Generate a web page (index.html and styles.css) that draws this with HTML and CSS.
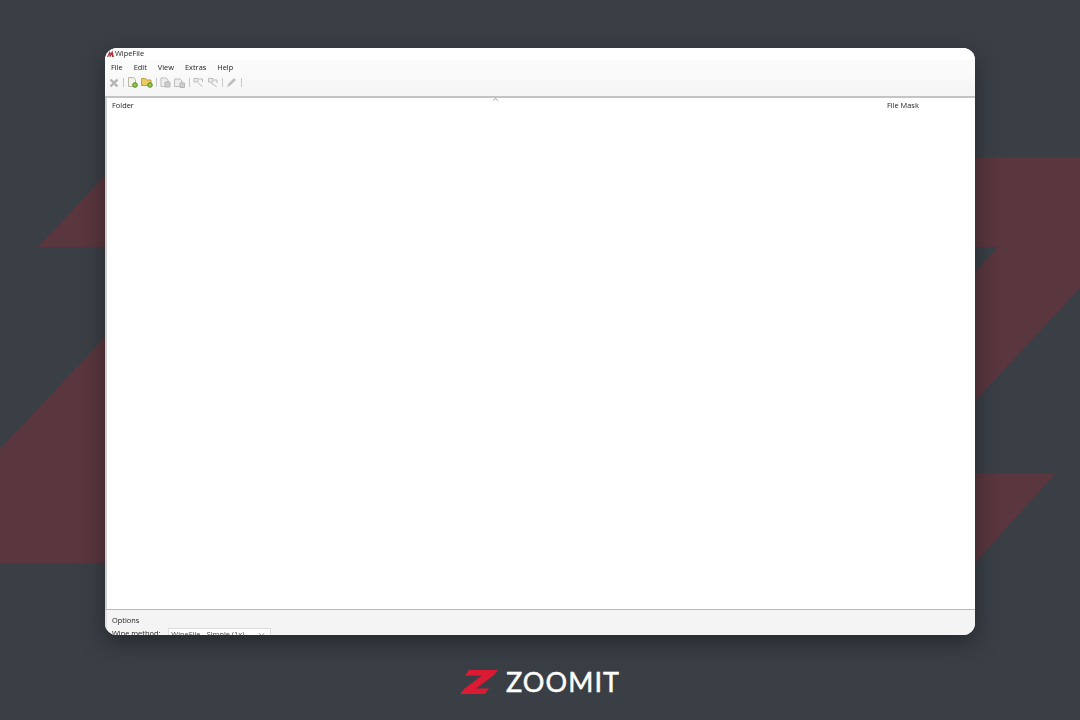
FILE: index.html
```html
<!DOCTYPE html>
<html lang="en">
<head>
    <meta charset="UTF-8">
    <meta name="viewport" content="width=device-width, initial-scale=1.0">
    <title>WipeFile</title>
    <link rel="stylesheet" href="styles.css">
</head>
<body>
    <!-- big faded Z behind the window -->
    <svg class="bg_z" viewBox="0 0 1080 720" aria-hidden="true">
        <polygon points="38,247 122,157 1080,157 1080,288 975,401 975,272 998,247"/>
        <polygon points="0,449 105,337 300,337 300,563 0,563"/>
        <polygon points="900,473 1056,473 975,563 900,563"/>
    </svg>

    <div class="window">
        <div class="title_bar">
            <svg class="app_icon" viewBox="0 0 8 8"><path d="M0 8 L3 1 L4.500 4 L6 0 L8 8 L6 8 L5 5 L4 8 L3 8 L2.500 5 L1.500 8 Z"/></svg>
            <span>WipeFile</span>
        </div>
        <ul class="menu_bar">
            <li>File</li>
            <li>Edit</li>
            <li>View</li>
            <li>Extras</li>
            <li>Help</li>
        </ul>
        <div class="tool_bar">
            <svg class="tool tool_x" viewBox="0 0 10 10"><path d="M1.500 1.500 L8.500 8.500 M8.500 1.500 L1.500 8.500"/></svg>
            <i class="sep"></i>
            <svg class="tool" viewBox="0 0 11 11"><path class="page" d="M1.500 .5 H6.500 L8.500 2.500 V9.500 H1.500 Z"/><circle class="plus" cx="8" cy="8" r="2.300"/></svg>
            <svg class="tool tool_wide" viewBox="0 0 12 11"><path class="folder" d="M.5 1.500 H4.500 L5.500 3 H10 V8.500 H.5 Z"/><circle class="plus" cx="9" cy="8" r="2.300"/></svg>
            <i class="sep"></i>
            <svg class="tool" viewBox="0 0 11 11"><path class="grey_page" d="M1 1 H6 L8 3 V9.500 H1 Z"/><path class="grey_fill" d="M5 5 H10 V10 H5 Z"/></svg>
            <svg class="tool" viewBox="0 0 11 11"><path class="grey_page" d="M.5 2 H6 L8 4 V9.500 H.5 Z"/><path class="grey_fill" d="M6 6 H10.500 V10.500 H6 Z"/></svg>
            <i class="sep sep_wide"></i>
            <svg class="tool" viewBox="0 0 11 11"><path class="grey_page" d="M1 1.500 H5 V5 H1 Z M5 6 L9.500 9.500 M6 2 H9.500 V5"/></svg>
            <svg class="tool" viewBox="0 0 11 11"><path class="grey_page" d="M1.500 1.500 H6 V5 H1.500 Z M4 6 L9.500 9.500 M7 3 H10 V6"/></svg>
            <i class="sep sep_wide"></i>
            <svg class="tool tool_pen" viewBox="0 0 11 11"><path d="M1.500 9.500 L3 6.500 L8 1.500 L9.500 3 L4.500 8 Z"/></svg>
            <i class="sep sep_wide"></i>
        </div>

        <div class="list_box">
            <div class="list_head">
                <span class="col_folder">Folder</span>
                <span class="sort_caret"></span>
                <span class="col_mask">File Mask</span>
            </div>
        </div>

        <div class="options">
            <div class="options_title">Options</div>
            <div class="options_row">
                <label>Wipe method:</label>
                <div class="select">
                    <span>WipeFile - Simple (1x)</span>
                    <svg class="select_arrow" viewBox="0 0 8 5"><path d="M1 1 L4 4 L7 1"/></svg>
                </div>
            </div>
        </div>
    </div>

    <div class="brand">
        <svg class="brand_mark" viewBox="0 0 38 24"><path d="M9 0 H38 L34 5 L16 18.500 H29 L25 24 H0 L4 19 L22 5.500 H5 Z"/></svg>
        <span class="brand_name">ZOOMIT</span>
    </div>
</body>
</html>
```

FILE: styles.css
```css
*{margin: 0;padding: 0;box-sizing: border-box;}

html,body{height: 100%;}

body{
    position: relative;
    overflow: hidden;
    background: #3a3f46;
    font-family: "Open Sans", "Liberation Sans", sans-serif;
    display: flex;
    flex-direction: column;
    align-items: center;
    padding-top: 48px;
}

.bg_z{position: absolute;left: 0;top: 0;width: 1080px;height: 720px;}
.bg_z polygon{fill: #5a363e;}

.window{
    position: relative;
    width: 870px;
    height: 587px;
    flex: none;
    display: flex;
    flex-direction: column;
    overflow: hidden;
    background: #fff;
    border-radius: 12px;
    box-shadow: 0 8px 22px rgba(20,24,26,.55);
    color: #222;
    font-size: 7.4px;
}

.title_bar{
    height: 12px;
    display: flex;
    align-items: flex-start;
    gap: 1px;
    padding-left: 2px;
    background: #fff;
    flex: none;
}
.title_bar span{filter: blur(.4px);line-height: 10px;}
.app_icon{width: 7px;height: 7px;margin-top: 2px;fill: #b5303a;}

.menu_bar{
    height: 15px;
    flex: none;
    display: flex;
    align-items: center;
    gap: 11px;
    padding: 0 0 2px 6px;
    list-style: none;
    background: #fafafa;
}
.menu_bar li{filter: blur(.4px);}

.tool_bar{
    height: 23px;
    flex: none;
    display: flex;
    align-items: center;
    gap: 3px;
    padding: 0 0 6px 4px;
    background: linear-gradient(#f9f9f9, #f5f5f5);
    border-bottom: 2px solid #c4c4c4;
}
.sep{width: 1px;height: 9px;background: #c9c9c9;}
.sep_wide{margin-left: 1px;}

.tool{width: 11px;height: 11px;fill: none;stroke-width: 1;filter: blur(.5px);}
.tool_wide{width: 12px;}
.tool_x{width: 10px;height: 10px;margin-right: 1px;stroke: #b3b3b3;stroke-width: 2.400;}
.tool_pen{fill: #bdbdbd;stroke: #aaa;stroke-width: .5;}
.page{fill: #f3f3ea;stroke: #b9b9a8;}
.folder{fill: #e9cb62;stroke: #c4a23c;}
.plus{fill: #9bc53d;stroke: #4c8a2a;}
.grey_page{fill: #eee;stroke: #bbb;}
.grey_fill{fill: #ccc;stroke: #b5b5b5;}

.list_box{
    flex: 1;
    border-left: 2px solid #cfcfcf;
    border-bottom: 1px solid #b9b9b9;
    background: #fff;
}
.list_head{
    position: relative;
    height: 12px;
    display: flex;
    justify-content: space-between;
    align-items: flex-end;
    padding-left: 5px;
}
.col_mask{width: 89px;padding-left: 1px;}
.col_folder,.col_mask{filter: blur(.4px);}
.sort_caret{
    position: absolute;
    left: 386px;
    top: 0;
    width: 5px;
    height: 5px;
    border-left: 1px solid #aaa;
    border-top: 1px solid #aaa;
    transform: rotate(45deg) scale(.8);
}

.options{
    height: 25px;
    flex: none;
    padding: 4px 0 0 5px;
    background: #f4f4f4;
    border-left: 2px solid #e0e0e0;
}
.options_title{height: 12px;line-height: 12px;filter: blur(.4px);}
.options_row{
    display: flex;
    gap: 8px;
    margin-top: 2px;
}
.options_row label{margin-top: -1px;line-height: 12px;white-space: nowrap;filter: blur(.4px);}
.select{
    width: 103px;
    height: 16px;
    flex: none;
    display: flex;
    justify-content: space-between;
    padding: 0 5px 0 2px;
    background: #fff;
    border: 1px solid #ddd;
    color: #444;
    filter: blur(.4px);
}
.select_arrow{width: 7px;height: 5px;margin-top: 3px;fill: none;stroke: #777;}

.brand{
    position: relative;
    flex: none;
    display: flex;
    align-items: center;
    gap: 8px;
    margin-top: 34px;
    height: 26px;
}
.brand_mark{width: 38px;height: 24px;fill: #dd1a34;}
.brand_name{
    font-family: "Lato", "Liberation Sans", sans-serif;
    font-size: 27px;
    line-height: 26px;
    letter-spacing: 1.100px;
    color: #fff;
    -webkit-text-stroke: .5px #fff;
}
```
